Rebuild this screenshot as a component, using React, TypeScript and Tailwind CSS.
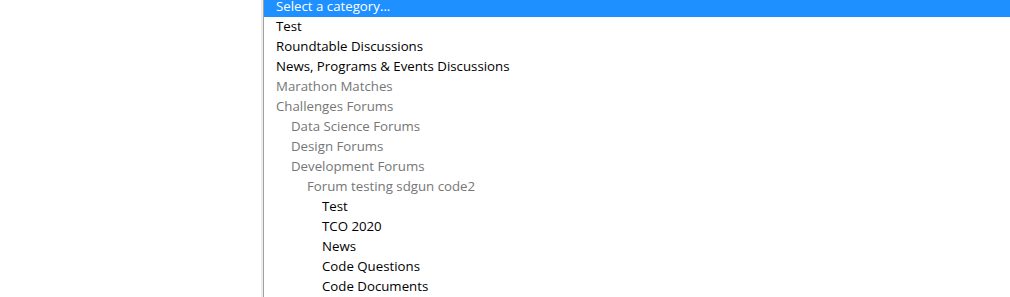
import React from 'react';

interface CategoryOption {
  label: string;
  depth: number;
  muted?: boolean;
  selected?: boolean;
}

const options: CategoryOption[] = [
  { label: 'Select a category...', depth: 0, selected: true },
  { label: 'Test', depth: 0 },
  { label: 'Roundtable Discussions', depth: 0 },
  { label: 'News, Programs & Events Discussions', depth: 0 },
  { label: 'Marathon Matches', depth: 0, muted: true },
  { label: 'Challenges Forums', depth: 0, muted: true },
  { label: 'Data Science Forums', depth: 1, muted: true },
  { label: 'Design Forums', depth: 1, muted: true },
  { label: 'Development Forums', depth: 1, muted: true },
  { label: 'Forum testing sdgun code2', depth: 2, muted: true },
  { label: 'Test', depth: 3 },
  { label: 'TCO 2020', depth: 3 },
  { label: 'News', depth: 3 },
  { label: 'Code Questions', depth: 3 },
  { label: 'Code Documents', depth: 3 },
];

const indent = ['pl-[12px]', 'pl-[27px]', 'pl-[43px]', 'pl-[58px]'];

export default function App(): React.ReactElement {
  return (
    <div className="flex h-[297px] w-[1010px] overflow-hidden bg-white">
      <div className="w-[261px] shrink-0" />
      <div className="w-[2px] shrink-0 bg-[#ececec]" />
      <div className="flex-1 border-l border-[#a0a0a0] bg-white">
        <ul className="-mt-[3px] font-['Open_Sans',sans-serif] text-[13.25px]">
          {options.map((opt, i) => (
            <li
              key={i}
              className={[
                'flex h-[20px] items-center whitespace-nowrap',
                indent[opt.depth],
                opt.selected ? '-mt-px h-[20px] bg-[#1e90ff] text-white' : opt.muted ? 'text-[#767676]' : 'text-black',
              ].join(' ')}
            >
              {opt.label}
            </li>
          ))}
        </ul>
      </div>
    </div>
  );
}
